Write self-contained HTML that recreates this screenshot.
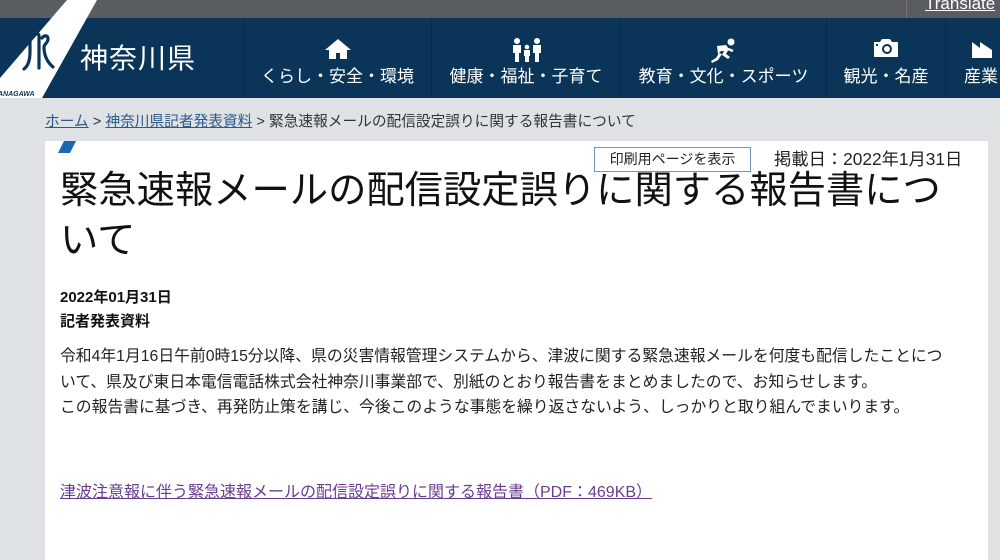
<!DOCTYPE html>
<html><head><meta charset="utf-8"><style>
*{margin:0;padding:0;box-sizing:border-box}
body{width:1000px;height:560px;overflow:hidden;background:#dfe2e4;font-family:"Liberation Sans","Noto Sans CJK JP",sans-serif;position:relative}
.top{position:absolute;left:0;top:0;width:1000px;height:18px;background:#595d61}
.tr{position:absolute;left:906px;top:0;height:18px;border-left:1px solid #777;padding-left:18px;color:#fff;font-size:17px;line-height:8px;text-decoration:underline;overflow:hidden}
.nav{position:absolute;left:0;top:18px;width:1000px;height:80px;background:#0b3558}
.sep{position:absolute;top:0;height:80px;width:1px;background:#06284a}
.item{position:absolute;top:0;height:80px;color:#fff;text-align:center;font-size:17px}
.item svg{position:absolute;top:20px}
.item span{position:absolute;top:49px;left:0;right:0;white-space:nowrap;line-height:20px}
.bc{position:absolute;left:45px;top:110px;font-size:14.7px;color:#333;white-space:nowrap}
.bc a{color:#2c5a8c;text-decoration:underline}
.panel{position:absolute;left:45px;top:141px;width:943px;height:419px;background:#fff}
.print{position:absolute;left:594px;top:147px;width:157px;height:25px;border:1px solid #6c9ac3;font-size:14px;text-align:center;line-height:23px;color:#222;background:#fff}
.date{position:absolute;left:774px;top:147px;font-size:17.3px;color:#222;line-height:24px}
h1{position:absolute;left:60px;top:166px;font-size:38.3px;font-weight:normal;line-height:50px;color:#111;white-space:nowrap}
.d{position:absolute;left:60px;top:286px;font-size:15px;font-weight:bold;line-height:24px;color:#111}
.p{position:absolute;left:60px;top:344px;font-size:15.8px;line-height:25.5px;color:#222;white-space:nowrap}
.lk{position:absolute;left:60px;top:478px;font-size:16px;color:#6a3c8f;text-decoration:underline;white-space:nowrap}
</style></head><body>
<div class="top"></div>
<div class="tr">Translate</div>
<div class="nav">
<div class="sep" style="left:243px"></div><div class="sep" style="left:431px"></div><div class="sep" style="left:620px"></div><div class="sep" style="left:826px"></div><div class="sep" style="left:945px"></div>
<div class="item" style="left:244px;width:187px"><svg style="left:80px" width="28" height="22" viewBox="0 0 28 22"><path d="M14 1L1 12h4v9h7v-6h4v6h7v-9h4z" fill="#fff"/></svg><span>くらし・安全・環境</span></div>
<div class="item" style="left:432px;width:188px"><svg style="left:78px" width="36" height="24" viewBox="0 0 36 24"><circle cx="7" cy="3" r="3" fill="#fff"/><circle cx="27" cy="3" r="3" fill="#fff"/><circle cx="17" cy="9" r="2.3" fill="#fff"/><path d="M3 7h8v8h-2v9h-4v-9h-2zM23 7h8v8h-2v9h-4v-9h-2zM14 12h6v6h-1v6h-4v-6h-1z" fill="#fff"/></svg><span>健康・福祉・子育て</span></div>
<div class="item" style="left:621px;width:205px"><svg style="left:88px" width="28" height="26" viewBox="0 0 28 26"><circle cx="22" cy="4" r="3.5" fill="#fff"/><path d="M8 8l9-1 3 4-3 5 4 3-2 2-6-4 2-4-3 0-3 3zM13 16l-4 6-6 3-1-2 5-3 3-5z" fill="#fff"/><path d="M19 11l5 2" stroke="#fff" stroke-width="2.5"/></svg><span>教育・文化・スポーツ</span></div>
<div class="item" style="left:827px;width:118px"><svg style="left:46px" width="26" height="20" viewBox="0 0 26 20"><path d="M1 4h6l2-3h8l2 3h6v15h-24z" fill="#fff"/><circle cx="14" cy="11" r="5" fill="#0b3558"/><circle cx="14" cy="11" r="3" fill="#fff"/><rect x="3" y="6" width="2" height="2" fill="#0b3558"/></svg><span>観光・名産</span></div>
<div class="item" style="left:946px;width:80px"><svg style="left:26px" width="20" height="20" viewBox="0 0 20 20"><path d="M0 4l8 6V4l12 8v8H0z" fill="#fff"/></svg><span style="text-align:left;left:18px">産業</span></div>
</div>
<svg style="position:absolute;left:0;top:0" width="100" height="98" viewBox="0 0 100 98"><polygon points="67,0 97,0 42,98 0,98 0,78" fill="#fff"/><text x="-2" y="96" font-size="7" font-style="italic" font-weight="bold" fill="#0b3558" font-family="Liberation Sans">ANAGAWA</text><g stroke="#0b3558" stroke-width="3.2" fill="none" stroke-linecap="round"><path d="M25 38c2-3 5-3 5 0v14c0 8-2 14-6 17"/><path d="M34 36c2-3 5-3 5 0v32"/><path d="M42 38c2-3 6-3 6 1 0 4-4 5-4 8 0 6 2 14 9 20"/></g></svg>
<div style="position:absolute;left:80px;top:39px;color:#fff;font-size:28px;letter-spacing:1px;line-height:40px">神奈川県</div>
<div class="bc"><a>ホーム</a> &gt; <a>神奈川県記者発表資料</a> &gt; 緊急速報メールの配信設定誤りに関する報告書について</div>
<div class="panel"></div>
<svg style="position:absolute;left:58px;top:141px" width="20" height="12"><polygon points="6,0 18,0 12,12 0,12" fill="#1a66b3"/></svg>
<div class="print">印刷用ページを表示</div>
<div class="date">掲載日：2022年1月31日</div>
<h1>緊急速報メールの配信設定誤りに関する報告書につ<br>いて</h1>
<div class="d">2022年01月31日<br>記者発表資料</div>
<div class="p">令和4年1月16日午前0時15分以降、県の災害情報管理システムから、津波に関する緊急速報メールを何度も配信したことにつ<br>いて、県及び東日本電信電話株式会社神奈川事業部で、別紙のとおり報告書をまとめましたので、お知らせします。<br>この報告書に基づき、再発防止策を講じ、今後このような事態を繰り返さないよう、しっかりと取り組んでまいります。</div>
<div class="lk">津波注意報に伴う緊急速報メールの配信設定誤りに関する報告書（PDF：469KB）</div>
</body></html>
